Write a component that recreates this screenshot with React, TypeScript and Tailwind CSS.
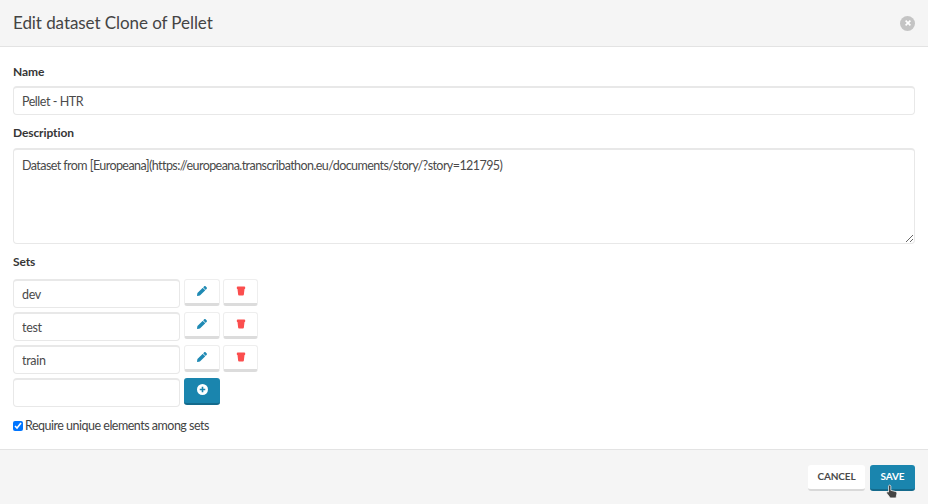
const sets = ['dev', 'test', 'train'];

function PencilIcon() {
  return (
    <svg viewBox="0 0 512 512" className="w-[10px] h-[10px] fill-[#1f8ab4]">
      <path d="M497.9 142.1l-46.1 46.1c-4.7 4.7-12.3 4.7-17 0l-111-111c-4.7-4.7-4.7-12.3 0-17l46.1-46.1c18.7-18.7 49.1-18.7 67.9 0l60.1 60.1c18.8 18.7 18.8 49.1 0 67.9zM284.2 99.8L21.6 362.4.4 483.9c-2.9 16.4 11.4 30.6 27.8 27.8l121.5-21.3 262.6-262.6c4.7-4.7 4.7-12.3 0-17l-111-111c-4.8-4.7-12.4-4.7-17.1 0z" />
    </svg>
  );
}

function BucketIcon() {
  return (
    <svg viewBox="0 0 24 24" className="w-[10px] h-[10px] fill-[#fb4e4e]">
      <path d="M2 2.5C2 1.5 3 1 4 1h16c1 0 2 .5 2 1.5V6c0 .6-.4 1-1 1h-.6l-1.6 14.2c-.1 1-1 1.8-2 1.8H7.2c-1 0-1.9-.8-2-1.8L3.6 7H3c-.6 0-1-.4-1-1z" />
    </svg>
  );
}

function SetInput({ value }: { value: string }) {
  return (
    <input
      readOnly
      value={value}
      className="w-[167px] h-[29px] bg-white border border-[#e8e8e8] border-t-2 rounded-[4px] px-2 text-[12.5px] tracking-[-0.3px] text-[#4a4a4a] outline-none"
    />
  );
}

export default function App() {
  return (
    <div className="w-[928px] h-[504px] flex flex-col bg-white text-[#4a4a4a] overflow-hidden font-['Lato',sans-serif]">
      <div className="h-[47px] shrink-0 bg-[#f5f5f5] border-b border-[#e3e3e3] flex items-center justify-between pl-[13px] pr-[13px]">
        <h1 className="text-[17px] tracking-[-0.07px] text-[#444]">Edit dataset Clone of Pellet</h1>
        <div className="w-[15px] h-[15px] rounded-full bg-[#c4c4c4] flex items-center justify-center text-white">
          <svg viewBox="0 0 10 10" className="w-[8px] h-[8px] stroke-white stroke-2"><path d="M2 2l6 6M8 2l-6 6" /></svg>
        </div>
      </div>

      <div className="flex-1 px-[13px] pt-[17px]">
        <label className="block text-[12px] tracking-[-0.1px] font-bold leading-[16px] text-[#363636]">Name</label>
        <input
          readOnly
          value="Pellet - HTR"
          className="block mt-[6px] w-[902px] h-[29px] bg-white border border-[#e8e8e8] border-t-2 rounded-[4px] px-2 text-[12.5px] tracking-[-0.45px] text-[#4a4a4a] outline-none"
        />
        <label className="block mt-[10px] text-[12px] tracking-[-0.1px] font-bold leading-[16px] text-[#363636]">Description</label>
        <textarea
          readOnly
          value="Dataset from [Europeana](https://europeana.transcribathon.eu/documents/story/?story=121795)"
          className="block mt-[7px] w-[902px] h-[96px] bg-white border border-[#e8e8e8] border-t-2 rounded-[4px] px-2 py-[6px] text-[12.5px] tracking-[-0.57px] leading-[20px] text-[#4a4a4a] outline-none"
        />
        <label className="block mt-[10px] text-[12px] tracking-[-0.1px] font-bold leading-[16px] text-[#363636]">Sets</label>
        <div className="mt-[9px] flex flex-col gap-[4px]">
          {sets.map((s) => (
            <div key={s} className="flex items-start h-[29px]">
              <SetInput value={s} />
              <button className="ml-[4px] w-[36px] h-[27px] bg-white rounded-[3px] border border-[#eee] border-b-[3px] border-b-[#dcdcdc] flex items-center justify-center pb-[2px]">
                <PencilIcon />
              </button>
              <button className="ml-[3px] w-[35px] h-[27px] bg-white rounded-[3px] border border-[#eee] border-b-[3px] border-b-[#dcdcdc] flex items-center justify-center pb-[2px]">
                <BucketIcon />
              </button>
            </div>
          ))}
          <div className="flex items-start h-[29px]">
            <SetInput value="" />
            <button className="ml-[4px] w-[36px] h-[27px] bg-[#1a85ae] rounded-[3px] border-b-[2px] border-b-[#146a8c] flex items-center justify-center pb-[3px]">
              <svg viewBox="0 0 24 24" className="w-[11px] h-[11px]">
                <circle cx="12" cy="12" r="12" fill="white" />
                <path d="M12 6v12M6 12h12" stroke="#1a85ae" strokeWidth="3.5" />
              </svg>
            </button>
          </div>
        </div>
        <label className="mt-[10px] flex items-center text-[12.5px] tracking-[-0.5px] leading-[18px] text-[#444]">
          <input type="checkbox" readOnly checked className="w-[10px] h-[10px] accent-[#0075ff] mr-[2px]" />
          Require unique elements among sets
        </label>
      </div>

      <div className="h-[55px] shrink-0 bg-[#f5f5f5] border-t border-[#e3e3e3] flex items-start justify-end gap-[5px] pt-[15px] pr-[13px]">
        <button className="w-[57px] h-[26px] pb-[2px] bg-white rounded-[3px] border-b-2 border-b-[#d9d9d9] text-[10px] tracking-[-0.1px] font-bold text-[#4a4a4a]">CANCEL</button>
        <button className="relative w-[45px] h-[26px] pb-[2px] bg-[#1a85ae] rounded-[3px] border-b-2 border-b-[#146a8c] text-[10px] tracking-[-0.1px] font-bold text-white">
          SAVE
          <svg viewBox="0 0 24 24" className="absolute left-[15px] top-[19px] w-[14px] h-[15px]">
            <path d="M8 1c1 0 2 1 2 2v7l8 2c2 1 3 2 2 5l-1 6H9l-6-8c-1-2 1-3 3-2l0 0V3c0-1 1-2 2-2z" fill="#444" stroke="#fff" strokeWidth="1.2" />
          </svg>
        </button>
      </div>
    </div>
  );
}
